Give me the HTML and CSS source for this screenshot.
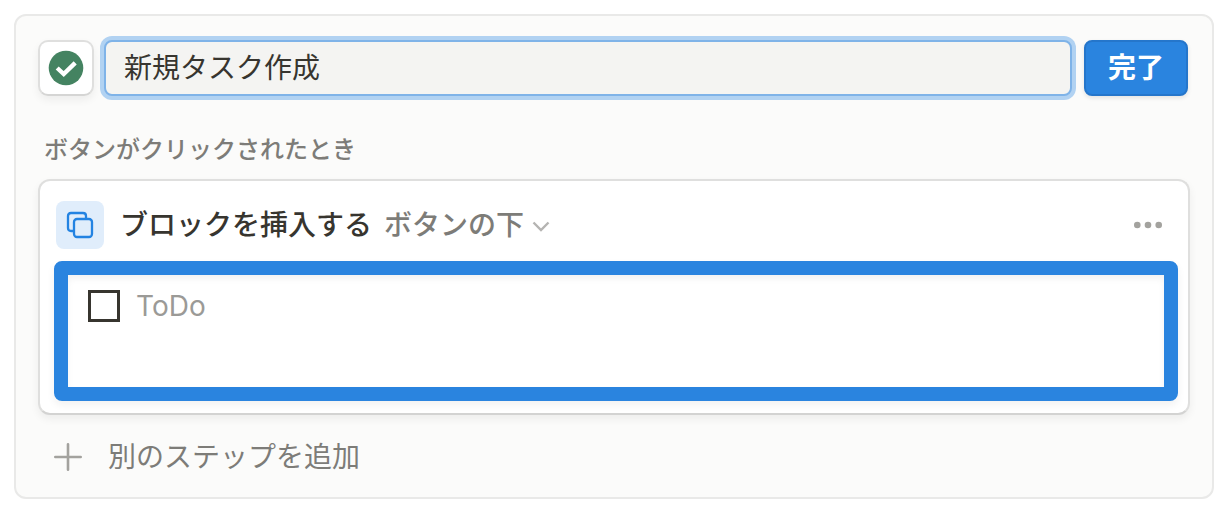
FILE: index.html
```html
<!DOCTYPE html>
<html lang="ja">
<head>
    <meta charset="UTF-8">
    <meta name="viewport" content="width=device-width, initial-scale=1.0">
    <title>新規タスク作成</title>
    <link rel="stylesheet" href="styles.css">
</head>
<body>
    <form class="panel">
        <div class="header">
            <button type="button" class="icon-button" aria-label="アイコン">
                <svg width="36" height="36" viewBox="0 0 36 36">
                    <circle cx="18" cy="18" r="17.3" fill="#448361"/>
                    <path d="M9.2 18L15.7 24L27.2 12.8" fill="none" stroke="#fff" stroke-width="4.4"/>
                </svg>
            </button>
            <input type="text" class="name-input" value="新規タスク作成" aria-label="ボタン名">
            <button type="submit" class="done-button">完了</button>
        </div>

        <h2 class="section-label">ボタンがクリックされたとき</h2>

        <div class="card">
            <div class="step-header">
                <span class="step-icon">
                    <svg width="28" height="28" viewBox="0 0 28 28" fill="none" stroke="#2383e2" stroke-width="2.3">
                        <path d="M8 20H5Q2 20 2 17V5Q2 2 5 2H17Q20 2 20 5V8"/>
                        <rect x="8" y="8" width="18" height="18" rx="3"/>
                    </svg>
                </span>
                <span class="step-title">ブロックを挿入する</span>
                <button type="button" class="position-button">
                    ボタンの下
                    <svg width="18" height="16" viewBox="0 0 18 16">
                        <path d="M1.5 5.5L9 13L16.5 5.5" fill="none" stroke="#b5b4b2" stroke-width="2.4"/>
                    </svg>
                </button>
                <button type="button" class="more-button" aria-label="その他">
                    <svg width="28" height="8" viewBox="0 0 28 8" fill="#a3a29e">
                        <circle cx="3.3" cy="4" r="3.3"/>
                        <circle cx="14" cy="4" r="3.3"/>
                        <circle cx="24.7" cy="4" r="3.3"/>
                    </svg>
                </button>
            </div>
            <div class="block-area">
                <label class="todo">
                    <input type="checkbox" class="todo-check">
                    <span>ToDo</span>
                </label>
            </div>
        </div>

        <button type="button" class="add-step">
            <svg width="28" height="28" viewBox="0 0 28 28">
                <path d="M14 1.3V26.7M1.3 14H26.7" stroke="#a3a29e" stroke-width="2.6" stroke-linecap="round"/>
            </svg>
            別のステップを追加
        </button>
    </form>
</body>
</html>
```

FILE: styles.css
```css
* {
    box-sizing: border-box;
}
body {
    margin: 14px 16px 14px 14px;
    background-color: #fff;
    color: #37352f;
    font-family: Inter, "Noto Sans CJK JP", sans-serif;
    font-size: 28px;
    line-height: 40px;
}
button,
input {
    margin: 0;
    padding: 0;
    border: none;
    background: none;
    color: inherit;
    font: inherit;
}
button {
    cursor: pointer;
}
svg {
    display: block;
    flex: none;
}
.panel {
    padding: 24px 22px 20px;
    border: 2px solid #e9e9e8;
    border-radius: 12px;
    background-color: #fbfbfa;
}
.header {
    display: flex;
    padding-right: 2px;
}
.icon-button {
    display: flex;
    align-items: center;
    justify-content: center;
    flex: none;
    width: 56px;
    height: 56px;
    margin-right: 10px;
    border: 2px solid #dfdfde;
    border-bottom-color: #d5d5d4;
    border-radius: 10px;
    background-color: #fff;
    box-shadow: 0 4px 8px rgba(15, 15, 15, 0.06);
}
.name-input {
    flex: 1;
    min-width: 0;
    height: 56px;
    margin-right: 12px;
    padding: 0 18px 4px;
    border: 2px solid #7fb3e8;
    border-radius: 8px;
    outline: none;
    background-color: #f4f4f2;
    box-shadow: 0 0 0 4px #b1d2f2;
}
.done-button {
    flex: none;
    width: 104px;
    height: 56px;
    border: 2px solid #2576cb;
    border-radius: 8px;
    background-color: #2a84df;
    box-shadow: 0 2px 4px rgba(15, 15, 15, 0.1);
    color: #fff;
    font-weight: 700;
}
.section-label {
    margin: 36px 0 11px;
    padding-left: 6px;
    color: #7d7c78;
    font-size: 24px;
    font-weight: 500;
    line-height: 36px;
}
.card {
    padding: 20px 10px 12px 14px;
    border: 2px solid #dfdfde;
    border-bottom-color: #d3d3d2;
    border-radius: 12px;
    background-color: #fff;
    box-shadow: 0 4px 8px rgba(15, 15, 15, 0.06);
}
.step-header {
    display: flex;
    align-items: center;
    padding: 0 16px 12px 2px;
}
.step-icon {
    display: flex;
    align-items: center;
    justify-content: center;
    width: 48px;
    height: 48px;
    margin-right: 16px;
    border-radius: 8px;
    background-color: #e0edfb;
}
.step-title {
    margin-right: 12px;
    font-weight: 500;
}
.position-button {
    display: flex;
    align-items: center;
    gap: 8px;
    color: #7d7c78;
    font-weight: 500;
}
.more-button {
    margin-left: auto;
}
.block-area {
    min-height: 140px;
    padding: 11px 20px;
    border: 14px solid #2a84df;
    border-radius: 8px;
    box-shadow: 0 4px 8px rgba(15, 15, 15, 0.06), inset 0 4px 6px rgba(15, 15, 15, 0.05);
}
.todo {
    display: flex;
    align-items: center;
    gap: 16px;
    color: #9b9a97;
}
.todo-check {
    width: 32px;
    height: 32px;
    border: 3px solid #37352f;
    appearance: none;
}
.todo-check:checked {
    background-color: #2383e2;
}
.add-step {
    display: flex;
    align-items: center;
    gap: 26px;
    margin-top: 22px;
    padding-left: 16px;
    color: #7d7c78;
}
```
